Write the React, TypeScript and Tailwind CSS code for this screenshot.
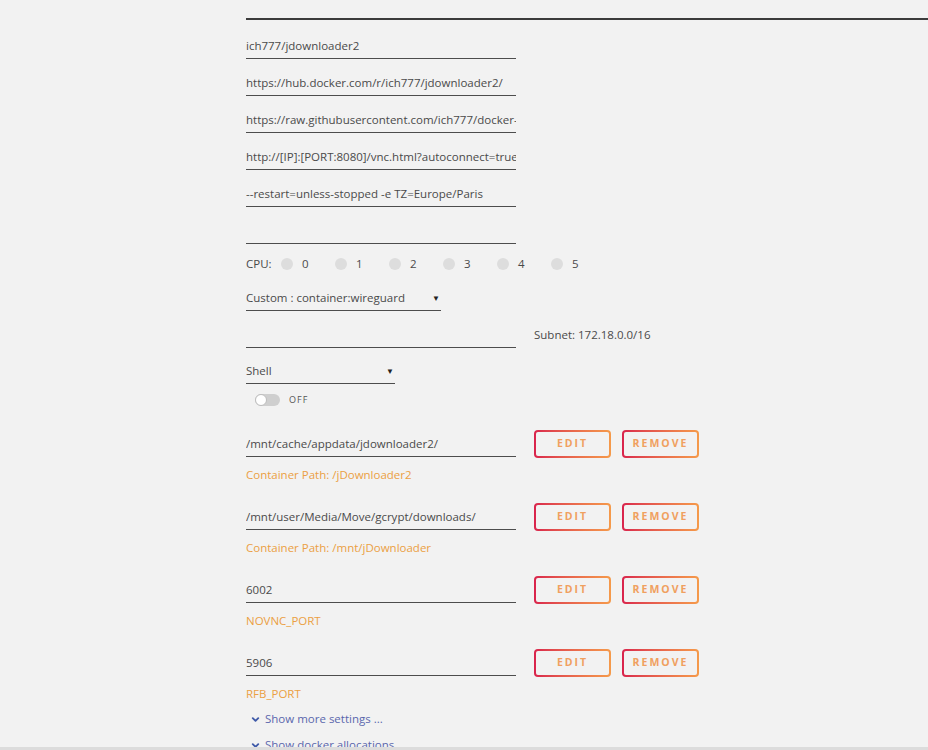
import { ChevronDown } from 'lucide-react';

const font = { fontFamily: '"Open Sans", "Liberation Sans", sans-serif' };

function Field({ value, width = 'w-[270px]', arrow = false }: { value?: string; width?: string; arrow?: boolean }) {
  return (
    <div className={`flex h-[26px] flex-none items-center overflow-hidden whitespace-nowrap border-b border-[#4d4d4d] text-[11.5px] text-[#4a4a4a] ${width}`}>
      <span className="flex-1 overflow-hidden">{value}</span>
      {arrow && <span className="mr-[1px] text-[8px] text-[#222]">▼</span>}
    </div>
  );
}

function GradButton({ label }: { label: string }) {
  return (
    <div className="h-[28px] w-[77px] rounded-[4px] bg-linear-to-r from-[#d9224c] to-[#f59a4a] p-[2px]">
      <div className="flex h-full w-full items-center justify-center rounded-[2px] bg-[#f2f2f2] text-[10.5px] font-bold tracking-[2px] text-[#f0a060]">
        {label}
      </div>
    </div>
  );
}

const mappings = [
  { host: '/mnt/cache/appdata/jdownloader2/', note: 'Container Path: /jDownloader2' },
  { host: '/mnt/user/Media/Move/gcrypt/downloads/', note: 'Container Path: /mnt/jDownloader' },
  { host: '6002', note: 'NOVNC_PORT' },
  { host: '5906', note: 'RFB_PORT' },
];

export default function App() {
  return (
    <div className="h-[750px] overflow-hidden bg-[#f2f2f2] pl-[246px] pt-[18px]" style={font}>
      <div className="h-[2px] bg-[#3c3c3c]" />

      <div className="mt-[13px] flex flex-col gap-[11px]">
        <Field value="ich777/jdownloader2" />
        <Field value="https://hub.docker.com/r/ich777/jdownloader2/" />
        <Field value="https://raw.githubusercontent.com/ich777/docker-templates/master/ich777/images/jdownloader.png" />
        <Field value="http://[IP]:[PORT:8080]/vnc.html?autoconnect=true&resize=remote" />
        <Field value="--restart=unless-stopped -e TZ=Europe/Paris" />
        <Field value="" />
      </div>

      <div className="mt-[10px] flex h-[20px] items-center text-[11.5px] text-[#4a4a4a]">
        <span className="w-[35px]">CPU:</span>
        {[0, 1, 2, 3, 4, 5].map((n) => (
          <div key={n} className="flex w-[54px] items-center">
            <span className="mr-[9px] h-[12px] w-[12px] rounded-full bg-[#dddddd]" />
            <span>{n}</span>
          </div>
        ))}
      </div>

      <div className="mt-[11px]">
        <Field value="Custom : container:wireguard" width="w-[195px]" arrow />
      </div>

      <div className="mt-[11px] flex items-center">
        <Field value="" />
        <span className="ml-[18px] pb-[1px] text-[11.5px] text-[#4a4a4a]">Subnet: 172.18.0.0/16</span>
      </div>

      <div className="mt-[10px]">
        <Field value="Shell" width="w-[149px]" arrow />
      </div>

      <div className="ml-[9px] mt-[8px] flex h-[16px] items-center">
        <div className="relative h-[12px] w-[25px] rounded-full bg-[#cfcfcf]">
          <span className="absolute left-0 top-0 h-[12px] w-[12px] rounded-full border border-[#bdbdbd] bg-white" />
        </div>
        <span className="ml-[9px] text-[9px] tracking-[1px] text-[#555]">OFF</span>
      </div>

      <div className="mt-[22px] flex flex-col gap-[20px]">
        {mappings.map((m) => (
          <div key={m.host} className="flex flex-col">
            <div className="flex h-[28px] items-center">
              <Field value={m.host} />
              <div className="ml-[18px] flex gap-[11px]">
                <GradButton label="EDIT" />
                <GradButton label="REMOVE" />
              </div>
            </div>
            <div className="mt-[9px] flex h-[16px] items-center text-[11.5px] text-[#eba043]">{m.note}</div>
          </div>
        ))}
      </div>

      <div className="mt-[8px] flex h-[18px] items-center text-[11.5px] text-[#5a67ad]">
        <ChevronDown size={11} strokeWidth={4} className="ml-[4px] mr-[4px] text-[#3f5aa8]" />
        Show more settings ...
      </div>
      <div className="mt-[8px] flex h-[18px] items-center text-[11.5px] text-[#5a67ad]">
        <ChevronDown size={11} strokeWidth={4} className="ml-[4px] mr-[4px] text-[#3f5aa8]" />
        Show docker allocations
      </div>

      <div className="fixed bottom-0 left-0 right-0 h-[3px] bg-[#dcdcdc]" />
    </div>
  );
}
